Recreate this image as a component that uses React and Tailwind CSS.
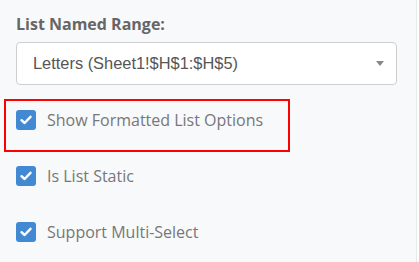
const Box = () => (
  <span className="flex items-center justify-center w-[20px] h-[20px] rounded-[3px] bg-[#4189d3] shrink-0">
    <svg width="12" height="10" viewBox="0 0 12 10" fill="none">
      <path d="M1.5 5.2 L4.6 8 L10.5 1.8" stroke="white" strokeWidth="2.4" strokeLinecap="round" strokeLinejoin="round" />
    </svg>
  </span>
);

const Row = ({ label }) => (
  <div className="flex items-center gap-[11px]">
    <Box />
    <span className="text-[16px] leading-5 text-[#777] font-['Open_Sans',sans-serif]">{label}</span>
  </div>
);

export default function App() {
  return (
    <div className="flex w-[419px] h-[262px] bg-white overflow-hidden">
      <div className="w-[417px] h-full bg-[#f8f9fb] border-r border-[#e6e8eb] pl-4 pr-[19px]">
        <div className="pt-[14px] text-[16px] leading-5 font-bold text-[#666] font-['Open_Sans',sans-serif]">
          List Named Range:
        </div>
        <div className="mt-2 h-[43px] flex items-center justify-between bg-white border border-[#cfcfcf] rounded-[4px] pl-4 pr-[12px]">
          <span className="text-[16.4px] text-[#555] font-['Liberation_Sans',Arial,sans-serif]">
            Letters (Sheet1!$H$1:$H$5)
          </span>
          <svg width="8" height="5" viewBox="0 0 8 5">
            <path d="M0 0 L8 0 L4 5 Z" fill="#888" />
          </svg>
        </div>
        <div className="mt-[14px] -ml-3 w-[286px] h-[53px] border-2 border-[#ff0000] pt-[9px] pl-[10px]">
          <Row label="Show Formatted List Options" />
        </div>
        <div className="mt-[14px]">
          <Row label="Is List Static" />
        </div>
        <div className="mt-[36px]">
          <Row label="Support Multi-Select" />
        </div>
      </div>
    </div>
  );
}
